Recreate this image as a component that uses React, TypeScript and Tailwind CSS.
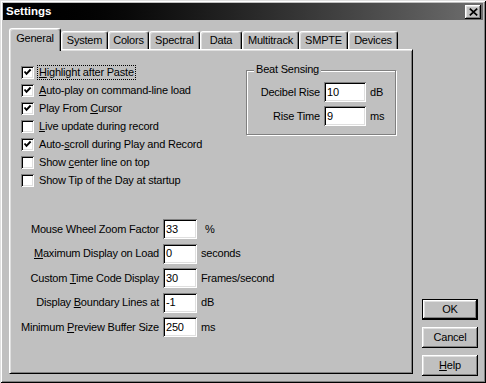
import React from "react"

const raised =
  "shadow-[inset_-1px_-1px_#000,inset_1px_1px_#fff,inset_-2px_-2px_#808080,inset_2px_2px_#dfdfdf]"
const sunken =
  "shadow-[inset_1px_1px_#808080,inset_-1px_-1px_#fff,inset_2px_2px_#000,inset_-2px_-2px_#dfdfdf]"

function U({ children }: { children: React.ReactNode }) {
  return <span className="underline underline-offset-[1px]">{children}</span>
}

function CheckBox({ checked }: { checked: boolean }) {
  return (
    <div className={`flex h-[13px] w-[13px] shrink-0 items-center justify-center bg-white ${sunken}`}>
      {checked && (
        <svg width="9" height="9" viewBox="0 0 9 9">
          <path d="M1.5 3.5 L3.5 5.8 L7.6 1.5" stroke="#000" strokeWidth="1.9" fill="none" />
        </svg>
      )}
    </div>
  )
}

function Field({ value, w }: { value: string; w: string }) {
  return (
    <div className={`flex h-[20px] items-center bg-white pl-[3px] ${w} ${sunken}`}>{value}</div>
  )
}

function Button({ children, isDefault }: { children: React.ReactNode; isDefault?: boolean }) {
  return (
    <div
      className={`flex h-[21px] w-[56px] items-center justify-center ${
        isDefault ? "border border-black" : ""
      }`}
    >
      <div className={`flex h-full w-full items-center justify-center ${raised}`}>{children}</div>
    </div>
  )
}

const tabs: [string, number][] = [
  ["General", 52],
  ["System", 47],
  ["Colors", 41],
  ["Spectral", 51],
  ["Data", 42],
  ["Multitrack", 57],
  ["SMPTE", 49],
  ["Devices", 50],
]

const checks: { label: React.ReactNode; checked: boolean; focus?: boolean }[] = [
  { label: <><U>H</U>ighlight after Paste</>, checked: true, focus: true },
  { label: <><U>A</U>uto-play on command-line load</>, checked: true },
  { label: <>Play From <U>C</U>ursor</>, checked: true },
  { label: <><U>L</U>ive update during record</>, checked: false },
  { label: <>Auto-<U>s</U>croll during Play and Record</>, checked: true },
  { label: <>Show <U>c</U>enter line on top</>, checked: false },
  { label: <>Show Tip of the Day at startup</>, checked: false },
]

const fields: { label: React.ReactNode; value: string; unit: string }[] = [
  { label: <>Mouse Wheel Zoom Factor</>, value: "33", unit: "%" },
  { label: <><U>M</U>aximum Display on Load</>, value: "0", unit: "seconds" },
  { label: <>Custom <U>T</U>ime Code Display</>, value: "30", unit: "Frames/second" },
  { label: <>Display <U>B</U>oundary Lines at</>, value: "-1", unit: "dB" },
  { label: <>Minimum <U>P</U>review Buffer Size</>, value: "250", unit: "ms" },
]

export default function App() {
  return (
    <div
      className="flex h-[383px] w-[486px] flex-col bg-[#c0c0c0] p-[3px] text-[11px] leading-none tracking-[-0.2px] text-black shadow-[inset_1px_1px_#dfdfdf,inset_-1px_-1px_#000,inset_2px_2px_#fff,inset_-2px_-2px_#808080]"
      style={{ fontFamily: '"Liberation Sans", Arial, sans-serif' }}
    >
      {/* Title bar */}
      <div className="flex h-[17px] shrink-0 items-center justify-between bg-linear-to-r from-black to-[#6e6e6e] pl-[3px] pr-[2px]">
        <span className="text-[11.5px] font-bold tracking-normal text-white">Settings</span>
        <div className={`flex h-[14px] w-[16px] items-center justify-center bg-[#c0c0c0] ${raised}`}>
          <svg width="9" height="8" viewBox="0 0 9 8">
            <path d="M0.8 0.6 L8.2 7.4 M8.2 0.6 L0.8 7.4" stroke="#000" strokeWidth="1.7" />
          </svg>
        </div>
      </div>

      <div className="flex flex-1 pl-[6px] pt-[8px]">
        {/* Tabs + panel */}
        <div className="flex w-[404px] flex-col">
          <div className="flex h-[21px] items-end">
            {tabs.map(([name, w], i) => {
              const active = i === 0
              return (
                <div
                  key={name}
                  style={{ width: w }}
                  className={`flex items-center justify-center rounded-t-[3px] border-t border-l border-r border-white border-r-black bg-[#c0c0c0] shadow-[inset_-1px_0_#808080,inset_1px_1px_#dfdfdf] ${
                    active ? "relative z-10 -mb-[2px] h-[23px] pb-[3px]" : "h-[18px]"
                  }`}
                >
                  {name}
                </div>
              )
            })}
          </div>

          {/* Panel */}
          <div className="flex h-[325px] flex-col border border-white border-r-black border-b-black shadow-[inset_1px_1px_#dfdfdf,inset_-1px_-1px_#808080]">
            <div className="flex items-start">
              <div className="flex flex-col pl-[11px] pt-[13px]">
                {checks.map((c, i) => (
                  <div key={i} className="flex h-[18px] items-center">
                    <CheckBox checked={c.checked} />
                    <span
                      className={`ml-[5px] whitespace-nowrap ${
                        c.focus ? "outline-1 outline-offset-[1px] outline-dotted outline-black" : ""
                      }`}
                    >
                      {c.label}
                    </span>
                  </div>
                ))}
              </div>

              {/* Beat Sensing group */}
              <div className="relative ml-auto mr-[16px] mt-[20px] w-[150px] border border-[#808080] pb-[8px] pt-[11px] shadow-[1px_1px_#fff,inset_1px_1px_#fff]">
                <span className="absolute -top-[7px] left-[7px] bg-[#c0c0c0] px-[2px]">Beat Sensing</span>
                <div className="grid grid-cols-[73px_42px_auto] items-center gap-x-[4px] gap-y-[4px]">
                  <span className="text-right">Decibel Rise</span>
                  <Field value="10" w="w-[42px]" />
                  <span>dB</span>
                  <span className="text-right">Rise Time</span>
                  <Field value="9" w="w-[42px]" />
                  <span>ms</span>
                </div>
              </div>
            </div>

            {/* Numeric fields */}
            <div className="mt-[30px] grid grid-cols-[149px_34px_auto] items-center gap-x-[4px] gap-y-[4.5px]">
              {fields.map((f, i) => (
                <React.Fragment key={i}>
                  <span className="whitespace-nowrap text-right">{f.label}</span>
                  <Field value={f.value} w="w-[34px]" />
                  <span className={i === 0 ? "ml-[4px]" : ""}>{f.unit}</span>
                </React.Fragment>
              ))}
            </div>
          </div>
        </div>

        {/* Buttons */}
        <div className="ml-[9px] flex flex-col justify-end gap-[7px] pb-[4px] pt-[21px]">
          <Button isDefault>OK</Button>
          <Button>Cancel</Button>
          <Button>
            <U>H</U>elp
          </Button>
        </div>
      </div>
    </div>
  )
}
